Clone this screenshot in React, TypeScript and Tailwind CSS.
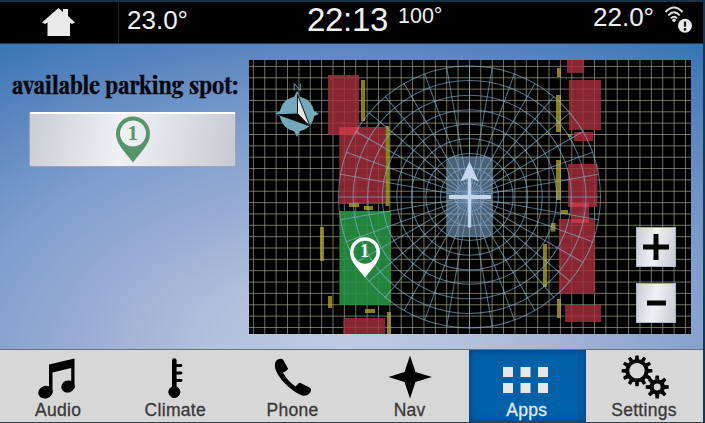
import React from "react";

type Rect = [number, number, number, number];

const reds: Rect[] = [
  [328, 75, 31, 60], [339.3, 127, 46.2, 77], [343.3, 318, 42, 16],
  [567, 60, 17, 13], [569, 80, 32, 50], [574, 132, 19, 9], [568, 164, 29.5, 43],
  [571, 203, 18, 20], [559, 219, 36, 74.5], [565, 305, 36, 17],
];
const yellows: Rect[] = [
  [361, 80, 4, 41], [385.5, 126, 4, 80], [349, 203, 10, 4], [364, 206, 9, 4],
  [320, 227, 4, 34], [328, 296, 4, 12], [365, 309, 10, 4], [387, 312, 4, 22],
  [557, 68, 4, 9], [556, 95, 5, 37], [568, 134, 3, 3], [556, 160, 5, 40],
  [561, 210, 7, 4], [551, 223, 4.5, 8.5], [543, 244, 4, 43], [557, 299, 4, 19],
];

const vertical = Array.from({ length: 39 }, (_, i) => 253.4 + i * 11.37);
const horizontal = Array.from({ length: 24 }, (_, i) => 66.4 + i * 11.35);
const rings = [131, 116.4, 101.8, 87.2, 72.7, 58.2, 43.6, 29, 14.5];
const spokes = Array.from({ length: 36 }, (_, i) => (i * Math.PI) / 18);

function Pin({ className, shape }: { className: string; shape: string }) {
  return (
    <svg viewBox="0 0 34 46" className={className}>
      <path fillRule="evenodd" className={shape} d="M17 0A17 17 0 0 0 0 17C0 28 9 35 17 46C25 35 34 28 34 17A17 17 0 0 0 17 0ZM17 4A13 13 0 1 1 17 30A13 13 0 1 1 17 4Z" />
      <text x="16.7" y="23" textAnchor="middle" className={`${shape} font-['Liberation_Serif',serif] text-[21px] font-bold`}>1</text>
    </svg>
  );
}

function gearPath(cx: number, cy: number, teeth: number, outer: number, root: number, hole: number) {
  const step = (Math.PI * 2) / teeth;
  const pts: string[] = [];
  for (let i = 0; i < teeth; i++) {
    const a = i * step - Math.PI / 2;
    for (const [o, r] of [[-0.25, root], [-0.14, outer], [0.14, outer], [0.25, root]]) {
      pts.push(`${cx + Math.cos(a + o * step) * r} ${cy + Math.sin(a + o * step) * r}`);
    }
  }
  return `M${pts.join("L")}ZM${cx - hole} ${cy}a${hole} ${hole} 0 1 0 ${hole * 2} 0a${hole} ${hole} 0 1 0 ${-hole * 2} 0Z`;
}

function RadarMap() {
  return (
    <svg viewBox="249 60 442 274" className="block h-[274px] w-[442px] bg-black">
      <g stroke="#b0b49c" strokeOpacity="0.62" strokeWidth="1">
        {vertical.map((x) => <line key={x} x1={x} x2={x} y1={60} y2={334} />)}
        {horizontal.map((y) => <line key={y} x1={249} x2={691} y1={y} y2={y} />)}
      </g>
      <g fill="#000">
        {reds.map(([x, y, w, h]) => <rect key={`${x}-${y}`} x={x} y={y} width={w} height={h} fillOpacity="0.6" />)}
        <rect x="339.4" y="211" width="51.6" height="94" fillOpacity="0.5" />
      </g>
      <g fill="#ee4254" fillOpacity="0.57">
        {reds.map(([x, y, w, h]) => <rect key={`${x}-${y}`} x={x} y={y} width={w} height={h} />)}
      </g>
      <rect x="339.4" y="211" width="51.6" height="94" fill="#2aa04a" fillOpacity="0.82" />
      <g fill="#b6aa20" fillOpacity="0.75">
        {yellows.map(([x, y, w, h]) => <rect key={`${x}-${y}`} x={x} y={y} width={w} height={h} />)}
      </g>
      <g fill="none" stroke="#8ab8d4" strokeOpacity="0.6" strokeWidth="1.05">
        {rings.map((r) => <circle key={r} cx="469.5" cy="197" r={r} />)}
        {spokes.map((a) => (
          <line key={a} x1="469.5" y1="197" x2={469.5 + Math.cos(a) * 131} y2={197 + Math.sin(a) * 131} />
        ))}
      </g>
      <rect x="447" y="156.5" width="45.5" height="80.5" rx="6" fill="#7ea3cb" fillOpacity="0.58" />
      <path d="M449 197H491" stroke="#c3d6ee" strokeWidth="4" />
      <path d="M469.5 170V227.5" stroke="#c3d6ee" strokeWidth="3.4" />
      <path d="M469.5 161.5L478.5 181.5L469.5 177.5L460.5 181.5Z" fill="#c3d6ee" />
      <g fill="#73a9bb">
        <circle cx="297" cy="114" r="17.3" />
        <path d="M275 113.7L282 110V117.5ZM319 113.7L312 110V117.5ZM297 137L293 129H301ZM297 91L293 99H301Z" />
      </g>
      <path d="M276 114.3L310 126.5L297.5 113.5Z" fill="#080808" />
      <path d="M297.5 94.5V113.5L310 126.5Z" fill="#e7e4e8" stroke="#111" strokeWidth="1" />
      <path d="M294.2 90.5V83.5L300.3 90.5V83.5" fill="none" stroke="#68a2b5" strokeWidth="1" />
    </svg>
  );
}

const steel = "bg-[linear-gradient(100deg,#c9ccd4,#f0f1f5_45%,#e6e7ed_60%,#c6c9d1)]";

function Tab({ label, active, children }: { label: string; active?: boolean; children: React.ReactNode }) {
  return (
    <div className={`flex w-[117.2px] shrink-0 flex-col items-center ${active ? "bg-[#0060a8] text-[#e2e7ef] shadow-[inset_0_0_9px_#003d80]" : "bg-[#d7d7d7] text-[#383838]"}`}>
      <svg viewBox="0 0 60 50" className="h-[50px] w-[60px] fill-current">{children}</svg>
      <span className="-mt-px -ml-[1px] text-[17.5px] leading-[22px] tracking-[0.3px] [-webkit-text-stroke:0.3px_currentColor]">{label}</span>
    </div>
  );
}

export default function App() {
  return (
    <div className="flex h-[423px] w-[705px] flex-col overflow-hidden border-r-2 border-[#17364f] bg-[#343e49] font-['Liberation_Sans',Arial,sans-serif]">
      <header className="flex h-[44px] shrink-0 items-start border-t-2 border-b border-t-[#163044] border-b-[#26354a] bg-black text-[#f0f0f0]">
        <div className="flex h-full w-[119px] shrink-0 border-r border-[#252525] pt-[6px] pl-[42px]">
          <svg viewBox="0 0 33 28" className="h-[28px] w-[33px] fill-[#e9e9e9]">
            <path d="M16.5 0L21 4V1H26V8L33 14.5L30 16L28 14.5V28H5.5V14.5L3 16L0 14.5Z" />
          </svg>
        </div>
        <span className="w-[181px] shrink-0 pt-[4px] pl-[8px] text-[26px] leading-[28px]">23.0°</span>
        <span className="w-[98px] shrink-0 pl-[7px] pt-[1px] text-[33px] leading-[34px] tracking-[-0.3px]">22:13</span>
        <span className="w-[194px] shrink-0 pt-[3px] text-[21.5px] leading-[22px]">100°</span>
        <span className="w-[73px] shrink-0 pt-[1px] pl-px text-[26px] leading-[28px]">22.0°</span>
        <svg viewBox="0 0 30 30" className="mt-[3px] h-[30px] w-[30px]">
          <g fill="none" stroke="#dedede" strokeWidth="2">
            <path d="M.5 7Q9-2 17.5 7M3.3 10.3Q9 4 14.7 10.3M6 13.3Q9 10 12 13.3" />
          </g>
          <circle cx="9" cy="15.2" r="1.8" fill="#dedede" />
          <circle cx="20" cy="20.7" r="7" fill="#e8e8e8" />
          <path d="M20 16.5V21.7" stroke="#111" strokeWidth="2.2" />
          <circle cx="20" cy="24.4" r="1.3" fill="#111" />
        </svg>
      </header>
      <main className="flex h-[305px] shrink-0 bg-[radial-gradient(ellipse_620px_380px_at_49%_104%,#bfcde4_0%,#b2c1dc_22%,#98abd4_44%,#7f9fce_62%,#5d87c0_82%,#3876b6_100%)]">
        <section className="w-[249px] shrink-0">
          <h1 className="mt-[24px] ml-[12px] origin-left scale-x-[0.87] whitespace-nowrap font-['Playfair_Display','Liberation_Serif',serif] text-[25px] leading-[32px] font-bold text-[#05070c] [-webkit-text-stroke:0.5px_currentColor]">available parking spot:</h1>
          <div className={`mt-[12px] ml-[29px] flex h-[55px] w-[207px] justify-center rounded-[2px] border border-t-2 border-[#9ba4ba] border-t-white pt-[2px] ${steel}`}>
            <Pin className="h-[47px] w-[34px]" shape="fill-[#579469]" />
          </div>
        </section>
        <section className="relative mt-[16px] h-[274px] w-[442px] shrink-0">
          <RadarMap />
          <div className="absolute top-[177px] left-[101px]"><Pin className="h-[41px] w-[30px]" shape="fill-white" /></div>
          <div className="absolute top-[167px] left-[387px] flex flex-col gap-[16px]">
            {["M7 20H33M20 7V33", "M11 20H30"].map((d) => (
              <button key={d} className={`h-[40px] w-[40px] border border-[#aab8d0] border-t-[#8ca9d1] ${steel}`}>
                <svg viewBox="0 0 40 40" className="-mt-px -ml-px h-[40px] w-[40px]"><path d={d} stroke="#050505" strokeWidth="5" /></svg>
              </button>
            ))}
          </div>
        </section>
      </main>
      <nav className="flex h-[73px] shrink-0 border-t border-[#69727f]">
        <Tab label="Audio">
          <g fill="#000">
            <path d="M20 14.5L45.5 8.5V38H42.2V18L23.5 22.5V43H20Z" />
            <ellipse cx="16.5" cy="42.2" rx="7.3" ry="6.2" transform="rotate(-20 16.5 42.2)" />
            <ellipse cx="39" cy="36.5" rx="6.8" ry="6" transform="rotate(-20 39 36.5)" />
          </g>
        </Tab>
        <Tab label="Climate">
          <g fill="#000" stroke="#000" strokeLinecap="round">
            <path d="M28.3 10.5V40" strokeWidth="4.6" />
            <path d="M28.5 15.5H35M28.5 23H35M28.5 30.5H35" strokeWidth="2.8" />
            <circle cx="28.3" cy="42" r="5.5" />
          </g>
        </Tab>
        <Tab label="Phone">
          <path fill="#000" d="M12.5 12C14 9 18 8 20 9.5L25 18.5Q25 20.5 20 22.5C23 28 27 33 32.5 36.5L36 33Q37 32.5 38.5 33.5L46.5 37.5Q49 39 47.5 42C45.5 46 40 47 36 44C25.5 38.5 13.5 26.5 12 17Q11.5 14 12.5 12Z" />
        </Tab>
        <Tab label="Nav">
          <path fill="#000" d="M30 5.5L35.5 22L52 27L35.5 32L30 48.5L24.5 32L8.5 27L24.5 22Z" />
        </Tab>
        <Tab label="Apps" active>
          <path fill="#e8e8ea" d="M6 17H16V27H6ZM23.5 17H33.5V27H23.5ZM41 17H51V27H41ZM6 33H16V43H6ZM23.5 33H33.5V43H23.5ZM41 33H51V43H41Z" />
        </Tab>
        <Tab label="Settings">
          <g fill="#050505" fillRule="evenodd" stroke="#050505" strokeWidth="1.2" strokeLinejoin="round">
            <path d={gearPath(22, 20.8, 12, 14.8, 11, 8.3)} />
            <path d={gearPath(42.2, 37, 8, 11, 7.2, 4)} />
          </g>
        </Tab>
      </nav>
    </div>
  );
}
